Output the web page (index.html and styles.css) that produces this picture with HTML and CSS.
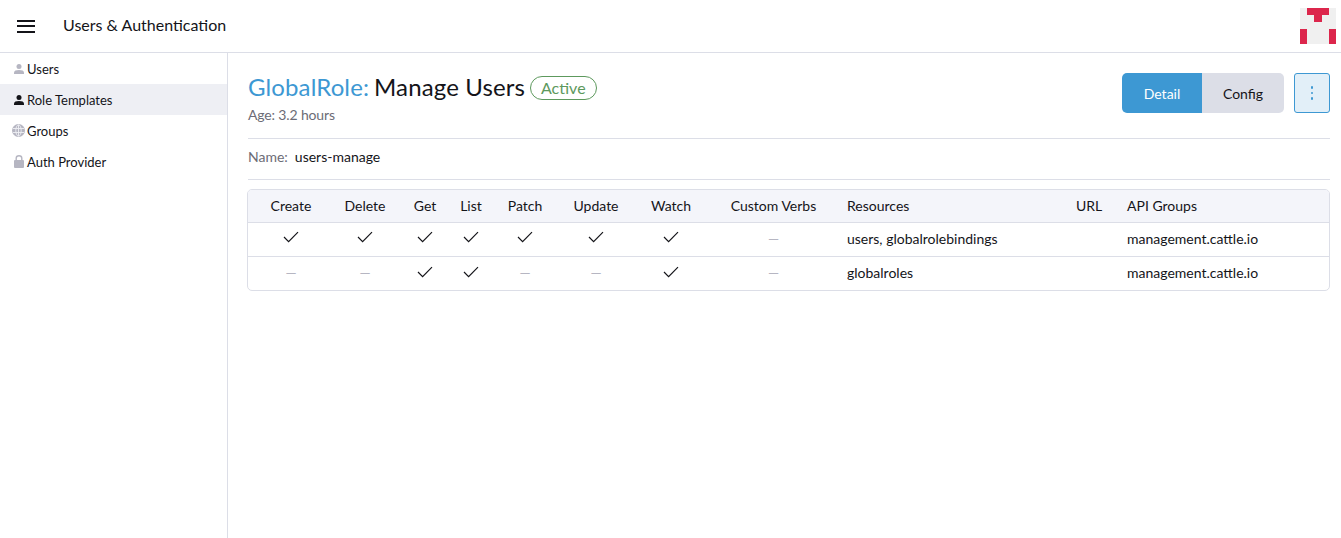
FILE: index.html
```html
<!DOCTYPE html>
<html lang="en">
<head>
<meta charset="utf-8">
<title>Users &amp; Authentication</title>
<link rel="stylesheet" href="styles.css">
</head>
<body>
<header class="topbar">
  <button class="menu" aria-label="Menu"><span></span><span></span><span></span></button>
  <div class="product">Users &amp; Authentication</div>
  <svg class="logo" viewBox="0 0 36 36" aria-label="Avatar">
    <rect width="36" height="36" fill="#f0f0f0"/>
    <path d="M7 0h22v7h-7v7h-8V7H7z" fill="#dc264c"/>
    <path d="M0 21h7v15H0zM29 21h7v15h-7z" fill="#dc264c"/>
  </svg>
</header>
<div class="shell">
  <nav class="side">
    <a class="nav-item"><span class="ico-box"><svg class="ico" viewBox="0 0 10 10"><circle cx="5" cy="2.600" r="2.500"/><path d="M0 10V8.600C0 6.800 2 6 5 6s5 .8 5 2.600V10z"/></svg></span>Users</a>
    <a class="nav-item active"><span class="ico-box"><svg class="ico" viewBox="0 0 10 10"><circle cx="5" cy="2.600" r="2.500"/><path d="M0 10V8.600C0 6.800 2 6 5 6s5 .8 5 2.600V10z"/></svg></span>Role Templates</a>
    <a class="nav-item"><span class="ico-box"><svg class="ico globe" viewBox="0 0 13 13"><circle cx="6.500" cy="6.500" r="6.500"/><g class="lines"><ellipse cx="6.500" cy="6.500" rx="2.700" ry="5.600"/><path d="M1 4.500h11M1 8.500h11M6.500 .8v11.400"/></g></svg></span>Groups</a>
    <a class="nav-item"><span class="ico-box"><svg class="ico lock" viewBox="0 0 10 13"><rect x="0" y="5" width="10" height="8" rx="1"/><path class="shackle" d="M2.200 5.500V3.300a2.800 2.600 0 0 1 5.600 0v2.200"/></svg></span>Auth Provider</a>
  </nav>
  <main class="content">
    <div class="masthead">
      <div class="heading">
        <h1 class="title"><a class="kind">GlobalRole:</a> <span>Manage Users</span><span class="badge">Active</span></h1>
        <div class="age">Age: 3.2 hours</div>
      </div>
      <div class="actions">
        <div class="toggle"><button class="seg on">Detail</button><button class="seg">Config</button></div>
        <button class="more" aria-label="More"><i></i><i></i><i></i></button>
      </div>
    </div>
    <div class="meta"><span class="label">Name:</span><span>users-manage</span></div>
    <div class="table-wrap">
      <table class="grid">
        <colgroup><col class="c1"><col class="c2"><col class="c3"><col class="c4"><col class="c5"><col class="c6"><col class="c7"><col class="c8"><col class="c9"><col class="c10"><col></colgroup>
        <thead>
          <tr><th>Create</th><th>Delete</th><th>Get</th><th>List</th><th>Patch</th><th>Update</th><th>Watch</th><th>Custom Verbs</th><th class="l">Resources</th><th class="l">URL</th><th class="l">API Groups</th></tr>
        </thead>
        <tbody>
          <tr>
            <td><svg class="chk" viewBox="0 0 16 12"><path d="M1 6l4.600 4.600L15 1.200"/></svg></td>
            <td><svg class="chk" viewBox="0 0 16 12"><path d="M1 6l4.600 4.600L15 1.200"/></svg></td>
            <td><svg class="chk" viewBox="0 0 16 12"><path d="M1 6l4.600 4.600L15 1.200"/></svg></td>
            <td><svg class="chk" viewBox="0 0 16 12"><path d="M1 6l4.600 4.600L15 1.200"/></svg></td>
            <td><svg class="chk" viewBox="0 0 16 12"><path d="M1 6l4.600 4.600L15 1.200"/></svg></td>
            <td><svg class="chk" viewBox="0 0 16 12"><path d="M1 6l4.600 4.600L15 1.200"/></svg></td>
            <td><svg class="chk" viewBox="0 0 16 12"><path d="M1 6l4.600 4.600L15 1.200"/></svg></td>
            <td class="dash">—</td>
            <td class="l">users, globalrolebindings</td>
            <td class="l"></td>
            <td class="l">management.cattle.io</td>
          </tr>
          <tr>
            <td class="dash">—</td>
            <td class="dash">—</td>
            <td><svg class="chk" viewBox="0 0 16 12"><path d="M1 6l4.600 4.600L15 1.200"/></svg></td>
            <td><svg class="chk" viewBox="0 0 16 12"><path d="M1 6l4.600 4.600L15 1.200"/></svg></td>
            <td class="dash">—</td>
            <td class="dash">—</td>
            <td><svg class="chk" viewBox="0 0 16 12"><path d="M1 6l4.600 4.600L15 1.200"/></svg></td>
            <td class="dash">—</td>
            <td class="l">globalroles</td>
            <td class="l"></td>
            <td class="l">management.cattle.io</td>
          </tr>
        </tbody>
      </table>
    </div>
  </main>
</div>
</body>
</html>
```
FILE: styles.css
```css
* { box-sizing: border-box; }
html, body { margin: 0; height: 100%; }
body { font-family: Lato, sans-serif; font-size: 14px; color: #141419; background: #fff; overflow: hidden; }
.topbar { height: 53px; border-bottom: 1px solid #dcdee7; display: flex; align-items: center; padding-left: 17px; padding-right: 5px; }
.menu { width: 18px; height: 13px; padding: 0; border: 0; background: none; display: flex; flex-direction: column; justify-content: space-between; margin-right: 28px; }
.menu span { display: block; height: 2px; background: #141419; }
.product { font-size: 16px; flex: 1; padding-bottom: 4px; }
.logo { width: 36px; height: 36px; display: block; }
.shell { display: flex; height: 485px; }
.side { width: 228px; border-right: 1px solid #dcdee7; flex: none; }
.nav-item { height: 31px; display: flex; align-items: center; padding-left: 12px; gap: 2px; font-size: 13px; }
.nav-item.active { background: #eeeff4; }
.ico-box { width: 13px; display: flex; justify-content: center; }
.ico { width: 10px; height: 10px; fill: #b6b6c2; display: block; }
.globe { width: 13px; height: 13px; }
.lines { fill: none; stroke: #eeeff4; stroke-width: .9; }
.lock { height: 13px; }
.shackle { fill: none; stroke: #b6b6c2; stroke-width: 1.400; }
.nav-item.active .ico { fill: #141419; }
.content { flex: 1; padding: 20px 11px 0 20px; }
.masthead { display: flex; justify-content: space-between; height: 66px; border-bottom: 1px solid #dcdee7; }
.title { margin: -1px 0 0; font-size: 24px; font-weight: 400; line-height: 30px; display: flex; align-items: center; gap: 5px; letter-spacing: .12px; }
.kind { color: #3d98d3; }
.badge { font-size: 16px; line-height: 22px; letter-spacing: 0; color: #5d995d; border: 1px solid #5d995d; border-radius: 12px; padding: 0 10px; height: 24px; margin-top: 2px; }
.age { color: #6c6c76; margin-top: 4px; letter-spacing: -.15px; }
.actions { display: flex; gap: 10px; align-items: flex-start; }
.toggle { display: flex; }
.seg { width: 82px; height: 40px; border: 0; background: #dcdee7; font: inherit; color: #141419; padding: 0; border-radius: 0 5px 5px 0; }
.seg.on { width: 80px; background: #3d98d3; color: #fff; border-radius: 5px 0 0 5px; }
.more { width: 36px; height: 40px; padding: 0; border: 1px solid #3d98d3; border-radius: 3px; background: #e2eff8; display: flex; flex-direction: column; align-items: center; justify-content: center; gap: 3px; }
.more i { width: 2.500px; height: 2.500px; background: #3d98d3; border-radius: 50%; }
.meta { height: 41px; border-bottom: 1px solid #dcdee7; display: flex; align-items: center; gap: 7px; margin-bottom: 9px; padding-bottom: 6px; }
.label { color: #6c6c76; }
.table-wrap { border: 1px solid #dcdee7; border-radius: 5px; overflow: hidden; margin-left: -1px; }
.grid { width: 100%; border-collapse: collapse; table-layout: fixed; }
.c1 { width: 86px; } .c2 { width: 62px; } .c3 { width: 58px; } .c4 { width: 34px; } .c5 { width: 74px; } .c6 { width: 68px; } .c7 { width: 82px; } .c8 { width: 123px; } .c9 { width: 229px; } .c10 { width: 51px; }
th { font-weight: 400; height: 32px; background: #f4f5fa; text-align: center; padding: 0; }
td { height: 34px; text-align: center; padding: 0 0 2px; border-top: 1px solid #dcdee7; }
.l { text-align: left; padding-left: 12px; }
.dash { color: #b6b6c2; }
.chk { width: 16px; height: 12px; fill: none; stroke: #141419; stroke-width: 1.200; display: inline-block; vertical-align: middle; margin-top: -5px; }
```
